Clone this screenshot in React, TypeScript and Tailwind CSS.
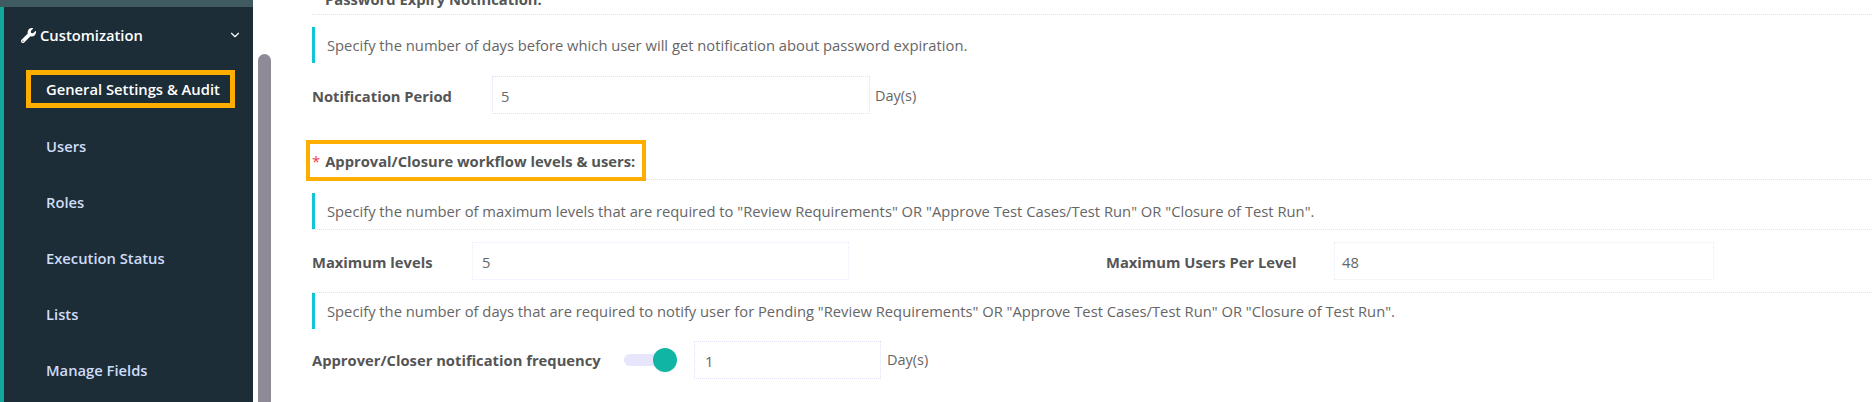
import { ChevronDown } from "lucide-react";
import { FaWrench } from "react-icons/fa";

const navItems = ["Users", "Roles", "Execution Status", "Lists", "Manage Fields"];

function Note({ children }: { children: React.ReactNode }) {
  return (
    <div className="h-[36px] flex items-center border-l-[3px] border-[#10c5d6] pl-3 text-[14.75px] text-[#666666]">
      {children}
    </div>
  );
}

function Field({ value, className }: { value: string; className: string }) {
  return (
    <div className={`h-[38px] flex items-center pt-[2px] border border-dotted text-[14.75px] text-[#666666] ${className}`}>
      {value}
    </div>
  );
}

export default function App() {
  return (
    <div className="flex h-[402px] w-[1872px] overflow-hidden bg-white font-['Open_Sans',sans-serif]">
      <aside className="w-[253px] shrink-0 flex flex-col bg-[#1c2d37]">
        <div className="h-[7px] bg-[#3f5a60]" />
        <div className="flex-1 border-l-[4px] border-[#12a99c] flex flex-col">
          <div className="h-[56px] flex items-center pl-[17px] pr-[11px] text-white font-semibold text-[14.75px]">
            <FaWrench size={15} className="mr-[4px]" />
            <span className="flex-1">Customization</span>
            <ChevronDown size={14} strokeWidth={2} />
          </div>
          <div className="ml-[22px] w-[209px] h-[38px] mt-[7px] pt-[1px] border-[5px] border-[#ffae00] flex items-center pl-[15px] text-white font-semibold text-[14.75px] whitespace-nowrap">
            General Settings &amp; Audit
          </div>
          <div className="mt-[10px] flex flex-col">
            {navItems.map((n) => (
              <div key={n} className="h-[56px] flex items-center pl-[42px] text-[#cfdcf8] font-semibold text-[14.75px]">
                {n}
              </div>
            ))}
          </div>
        </div>
      </aside>
      <div className="ml-[5px] mt-[54px] w-[13px] shrink-0 rounded-t-full bg-[#8e8a96]" />
      <main className="flex-1 min-w-0 pl-[41px] text-[#666666]">
        <div className="h-[14px] pl-[13px] flex items-end text-[14.75px] font-bold leading-none overflow-hidden">
          <span className="pb-[7px] text-[#555555]">Password Expiry Notification:</span>
        </div>
        <div className="border-t border-dotted border-[#e2e0f8] pt-[12px]">
          <Note>Specify the number of days before which user will get notification about password expiration.</Note>
        </div>
        <div className="flex items-center mt-[13px]">
          <span className="w-[180px] pt-[2px] font-bold text-[14.75px] text-[#555555]">Notification Period</span>
          <Field value="5" className="w-[378px] pl-[8px] border-[#e2e0f8]" />
          <span className="ml-[5px] pt-[2px] text-[14.5px]">Day(s)</span>
        </div>
        <div className="mt-[26px] h-[41px] flex">
          <div className="-ml-[6px] w-[340px] h-[41px] pt-[1px] border-[4px] border-[#ffae00] flex items-center pl-[2px] font-bold text-[14.75px] text-[#555555] whitespace-nowrap">
            <span className="text-[#f4364c] mr-[5px] font-normal">*</span>
            Approval/Closure workflow levels &amp; users:
          </div>
          <div className="flex-1 border-b border-dotted border-[#e2e0f8] mb-[1px]" />
        </div>
        <div className="mt-[12px]">
          <Note>Specify the number of maximum levels that are required to "Review Requirements" OR "Approve Test Cases/Test Run" OR "Closure of Test Run".</Note>
        </div>
        <div className="border-t border-dotted border-[#e2e0f8] flex items-center pt-[12px] pb-[12px]">
          <span className="w-[160px] pt-[2px] font-bold text-[14.75px] text-[#555555]">Maximum levels</span>
          <Field value="5" className="w-[377px] pl-[9px] border-[#ecebfb]" />
          <span className="ml-[257px] w-[228px] pt-[2px] font-bold text-[14.75px] text-[#555555]">Maximum Users Per Level</span>
          <Field value="48" className="w-[380px] pl-[7px] border-[#ecebfb]" />
        </div>
        <div className="border-t border-dotted border-[#e2e0f8]">
          <Note>Specify the number of days that are required to notify user for Pending "Review Requirements" OR "Approve Test Cases/Test Run" OR "Closure of Test Run".</Note>
        </div>
        <div className="flex items-center mt-[12px]">
          <span className="w-[312px] font-bold text-[14.75px] text-[#555555]">Approver/Closer notification frequency</span>
          <div className="w-[53px] h-[24px] flex items-center relative">
            <div className="w-[40px] h-[12px] rounded-full bg-[#e6e5fb]" />
            <div className="absolute right-0 w-[24px] h-[24px] rounded-full bg-[#11b5a4]" />
          </div>
          <Field value="1" className="ml-[17px] w-[187px] pl-[10px] border-[#e2e0f8]" />
          <span className="ml-[6px] text-[14.5px]">Day(s)</span>
        </div>
      </main>
    </div>
  );
}
